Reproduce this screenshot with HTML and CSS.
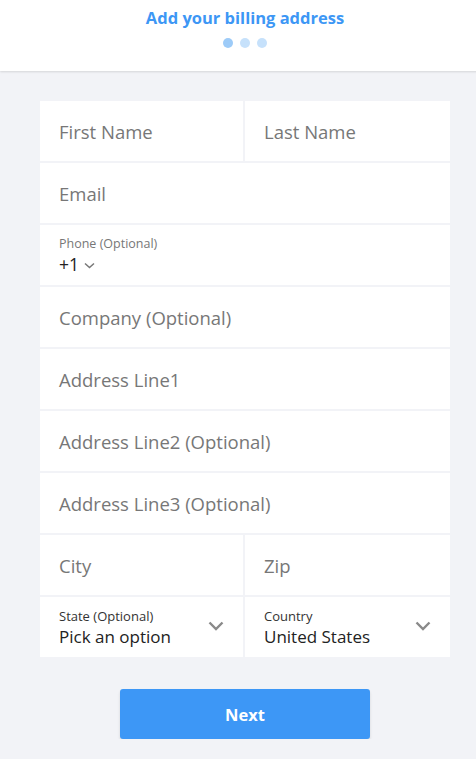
FILE: index.html
```html
<!DOCTYPE html>
<html lang="en">
<head>
  <meta charset="UTF-8" />
  <meta name="viewport" content="width=device-width, initial-scale=1.0"/>
  <title>Billing address</title>
  <link rel="stylesheet" href="styles.css">
</head>
<body>
  <div class="page">
    <header>
      <h1>Add your billing address</h1>
      <div class="dots">
        <span class="dot active"></span>
        <span class="dot"></span>
        <span class="dot"></span>
      </div>
    </header>

    <form class="form">
      <div class="field"><span class="placeholder">First Name</span></div>
      <div class="field"><span class="placeholder">Last Name</span></div>
      <div class="field wide"><span class="placeholder">Email</span></div>
      <div class="field wide phone">
        <span class="small-label">Phone (Optional)</span>
        <span class="code">+1
          <svg width="11" height="7" viewBox="0 0 11 7"><path d="M1 1.5 5.5 5.5 10 1.5" fill="none" stroke="#777" stroke-width="1.5"/></svg>
        </span>
      </div>
      <div class="field wide"><span class="placeholder">Company (Optional)</span></div>
      <div class="field wide"><span class="placeholder">Address Line1</span></div>
      <div class="field wide"><span class="placeholder">Address Line2 (Optional)</span></div>
      <div class="field wide"><span class="placeholder">Address Line3 (Optional)</span></div>
      <div class="field"><span class="placeholder">City</span></div>
      <div class="field"><span class="placeholder">Zip</span></div>
      <div class="field select">
        <div class="select-text">
          <span class="select-label">State (Optional)</span>
          <span class="select-value">Pick an option</span>
        </div>
        <svg class="chevron" width="16" height="10" viewBox="0 0 16 10"><path d="M1.5 1.5 8 8 14.5 1.5" fill="none" stroke="#8a8a8a" stroke-width="2.4"/></svg>
      </div>
      <div class="field select">
        <div class="select-text">
          <span class="select-label">Country</span>
          <span class="select-value">United States</span>
        </div>
        <svg class="chevron" width="16" height="10" viewBox="0 0 16 10"><path d="M1.5 1.5 8 8 14.5 1.5" fill="none" stroke="#8a8a8a" stroke-width="2.4"/></svg>
      </div>
    </form>

    <div class="actions">
      <button type="button">Next</button>
    </div>
  </div>
</body>
</html>
```

FILE: styles.css
```css
* {
  margin: 0;
  padding: 0;
  box-sizing: border-box;
}

body {
  font-family: 'Open Sans', 'Noto Sans', Arial, sans-serif;
  background: #f2f3f7;
  color: #333;
  overflow: hidden;
}

.page {
  width: 490px;
}

header {
  background: #fff;
  height: 71px;
  padding-top: 6px;
  text-align: center;
  box-shadow: 0 1px 2px rgba(0, 0, 0, 0.12);
}

h1 {
  font-size: 16.5px;
  font-weight: 700;
  color: #3d97f5;
  line-height: 24px;
}

.dots {
  display: flex;
  justify-content: center;
  gap: 7px;
  margin-top: 8px;
}

.dot {
  width: 10px;
  height: 10px;
  border-radius: 50%;
  background: #c6e1fb;
}

.dot.active {
  background: #9dcbf8;
}

.form {
  display: grid;
  grid-template-columns: 203px 205px;
  gap: 2px;
  width: 410px;
  margin: 30px 0 0 40px;
}

.field {
  background: #fff;
  height: 60px;
  padding: 0 19px;
  display: flex;
  align-items: center;
}

.field.wide {
  grid-column: span 2;
}

.placeholder {
  font-size: 18.5px;
  color: #777;
}

.phone {
  flex-direction: column;
  align-items: flex-start;
  justify-content: flex-start;
  padding-top: 10px;
}

.small-label {
  font-size: 12.5px;
  color: #777;
  line-height: 17px;
}

.code {
  font-size: 17.5px;
  color: #222;
  line-height: 24px;
  display: flex;
  align-items: center;
  gap: 5px;
}

.code svg {
  margin-top: 2px;
}

.select {
  justify-content: space-between;
}

.select-text {
  display: flex;
  flex-direction: column;
  padding-top: 1px;
}

.select-label {
  font-size: 13px;
  color: #333;
  line-height: 17px;
}

.select-value {
  font-size: 17px;
  color: #222;
  line-height: 23px;
}

.chevron {
  margin-top: -2px;
}

.actions {
  display: flex;
  justify-content: center;
  margin-top: 32px;
}

button {
  width: 250px;
  height: 50px;
  background: #3d97f6;
  color: #fff;
  font-family: inherit;
  font-size: 16.5px;
  font-weight: 700;
  border: none;
  border-radius: 3px;
  box-shadow: 0 2px 3px rgba(0, 0, 0, 0.12);
  cursor: pointer;
}
```
